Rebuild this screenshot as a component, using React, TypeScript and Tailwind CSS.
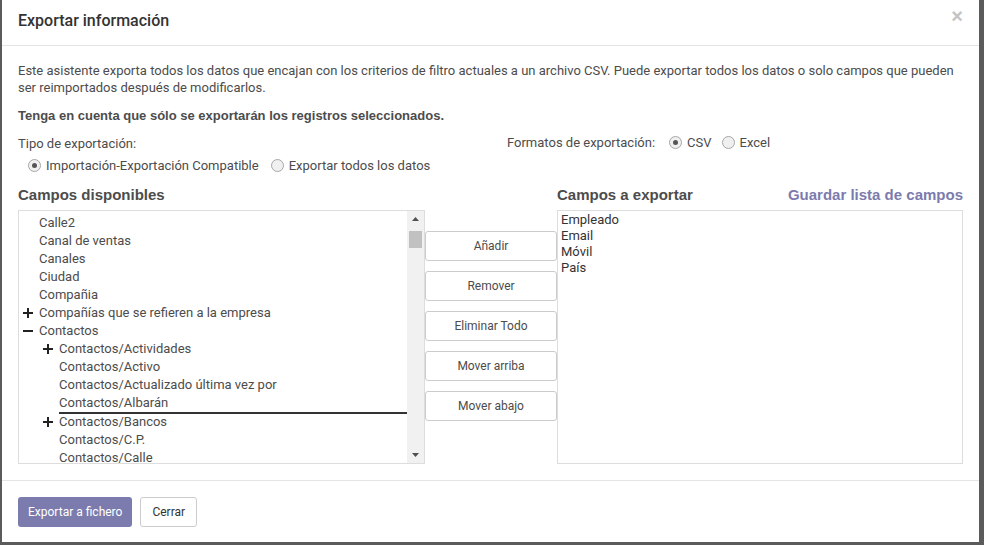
import React from "react";

const font = { fontFamily: "Roboto, 'Liberation Sans', sans-serif" };
const arial = { fontFamily: "'Liberation Sans', Arial, sans-serif" };

type Field = { label: string; level: number; toggle?: "plus" | "minus"; marker?: boolean };

const availableFields: Field[] = [
  { label: "Calle2", level: 0 },
  { label: "Canal de ventas", level: 0 },
  { label: "Canales", level: 0 },
  { label: "Ciudad", level: 0 },
  { label: "Compañia", level: 0 },
  { label: "Compañías que se refieren a la empresa", level: 0, toggle: "plus" },
  { label: "Contactos", level: 0, toggle: "minus" },
  { label: "Contactos/Actividades", level: 1, toggle: "plus" },
  { label: "Contactos/Activo", level: 1 },
  { label: "Contactos/Actualizado última vez por", level: 1 },
  { label: "Contactos/Albarán", level: 1, marker: true },
  { label: "Contactos/Bancos", level: 1, toggle: "plus" },
  { label: "Contactos/C.P.", level: 1 },
  { label: "Contactos/Calle", level: 1 },
];

const exportFields = ["Empleado", "Email", "Móvil", "País"];

const actions = ["Añadir", "Remover", "Eliminar Todo", "Mover arriba", "Mover abajo"];

function Radio({ checked, label }: { checked?: boolean; label: string }) {
  return (
    <label className="flex items-center gap-[5px]">
      <span className="w-[13px] h-[13px] rounded-full border border-[#a6a6a6] bg-[#f0f0f0] flex items-center justify-center">
        {checked && <span className="w-[5px] h-[5px] rounded-full bg-[#555]" />}
      </span>
      <span>{label}</span>
    </label>
  );
}

function Toggle({ kind }: { kind: "plus" | "minus" }) {
  return (
    <svg width="10" height="10" viewBox="0 0 10 10">
      <rect x="0" y="4" width="10" height="2" fill="#222" />
      {kind === "plus" && <rect x="4" y="0" width="2" height="10" fill="#222" />}
    </svg>
  );
}

export default function App() {
  return (
    <div className="w-[984px] h-[545px] bg-[#5b5b5b] overflow-hidden" style={font}>
      <div className="ml-[2px] w-[977px] h-[542px] bg-white flex flex-col text-[13px] text-[#4c4c4c]">
        {/* Header */}
        <div className="h-[46px] border-b border-[#e5e5e5] flex items-center justify-between pl-[16px] pr-[16px]">
          <h4 className="text-[16px] font-medium text-[#333] -mt-[4px]">Exportar información</h4>
          <span className="text-[#c4c4c4] text-[20px] font-bold leading-none -mt-[14px]" style={arial}>×</span>
        </div>

        {/* Body */}
        <div className="flex-1 px-[16px] pt-[16px]">
          <p className="leading-[17px]">
            Este asistente exporta todos los datos que encajan con los criterios de filtro actuales a un archivo CSV. Puede exportar todos los datos o solo campos que pueden ser reimportados después de modificarlos.
          </p>
          <p className="mt-[11px] font-bold leading-[17px] text-[#4c4c4c]" style={arial}>
            Tenga en cuenta que sólo se exportarán los registros seleccionados.
          </p>

          <div className="mt-[11px] flex">
            <div className="w-[489px]">
              <div className="leading-[17px]">Tipo de exportación:</div>
              <div className="mt-[5px] ml-[10px] flex gap-[12px] leading-[17px]">
                <Radio checked label="Importación-Exportación Compatible" />
                <Radio label="Exportar todos los datos" />
              </div>
            </div>
            <div className="flex gap-[8px] leading-[17px] items-start -mt-[1px]">
              <span className="mr-[6px]">Formatos de exportación:</span>
              <Radio checked label="CSV" />
              <span className="ml-[2px]">
                <Radio label="Excel" />
              </span>
            </div>
          </div>

          <div className="mt-[11px] flex">
            {/* Available fields */}
            <div className="w-[407px] flex flex-col">
              <h4 className="text-[15px] font-bold text-[#4c4c4c] leading-[20px] mb-[5px]" style={arial}>
                Campos disponibles
              </h4>
              <div className="h-[254px] border border-[#ddd] flex overflow-hidden">
                <div className="flex-1 pt-[3px] text-[#4c4c4c]">
                  {availableFields.map((f) => (
                    <div
                      key={f.label}
                      className={`flex items-center ${f.marker ? "h-[19px]" : "h-[18px]"} ${f.level === 1 ? "pl-[24px]" : "pl-[4px]"}`}
                    >
                      <span className="w-[16px] flex items-center">{f.toggle && <Toggle kind={f.toggle} />}</span>
                      <span
                        className={`flex-1 leading-[18px] ${f.marker ? "border-b-2 border-[#333] h-[20px]" : ""}`}
                      >
                        {f.label}
                      </span>
                    </div>
                  ))}
                </div>
                <div className="w-[17px] bg-[#f1f1f1] flex flex-col items-center">
                  <svg width="7" height="4" viewBox="0 0 7 4" className="mt-[6px]">
                    <polygon points="3.5,0 7,4 0,4" fill="#505050" />
                  </svg>
                  <div className="mt-[10px] w-[13px] h-[17px] bg-[#c1c1c1]" />
                  <div className="flex-1" />
                  <svg width="7" height="4" viewBox="0 0 7 4" className="mb-[6px]">
                    <polygon points="0,0 7,0 3.5,4" fill="#505050" />
                  </svg>
                </div>
              </div>
            </div>

            {/* Action buttons */}
            <div className="w-[132px] pt-[46px] flex flex-col gap-[10px]">
              {actions.map((a) => (
                <button
                  key={a}
                  className="h-[30px] w-[132px] border border-[#ccc] rounded-[3px] bg-white text-[12px] text-[#4c4c4c]"
                >
                  {a}
                </button>
              ))}
            </div>

            {/* Export fields */}
            <div className="flex-1 flex flex-col">
              <div className="flex items-center justify-between leading-[20px] mb-[5px]" style={arial}>
                <h4 className="text-[15px] font-bold text-[#4c4c4c]">Campos a exportar</h4>
                <a className="text-[15px] font-bold text-[#7c7bad]">Guardar lista de campos</a>
              </div>
              <div className="h-[254px] border border-[#ddd] pl-[3px] pt-[1px] text-[#333]">
                {exportFields.map((f) => (
                  <div key={f} className="leading-[16px] text-[13px]">{f}</div>
                ))}
              </div>
            </div>
          </div>
        </div>

        {/* Footer */}
        <div className="h-[62px] border-t border-[#e5e5e5] flex items-center gap-[8px] px-[16px]">
          <button className="h-[30px] px-[10px] rounded-[3px] bg-[#7c7bad] text-white text-[12px]">
            Exportar a fichero
          </button>
          <button className="h-[30px] px-[11px] rounded-[3px] bg-white border border-[#ccc] text-[#333] text-[12px]">
            Cerrar
          </button>
        </div>
      </div>
    </div>
  );
}
